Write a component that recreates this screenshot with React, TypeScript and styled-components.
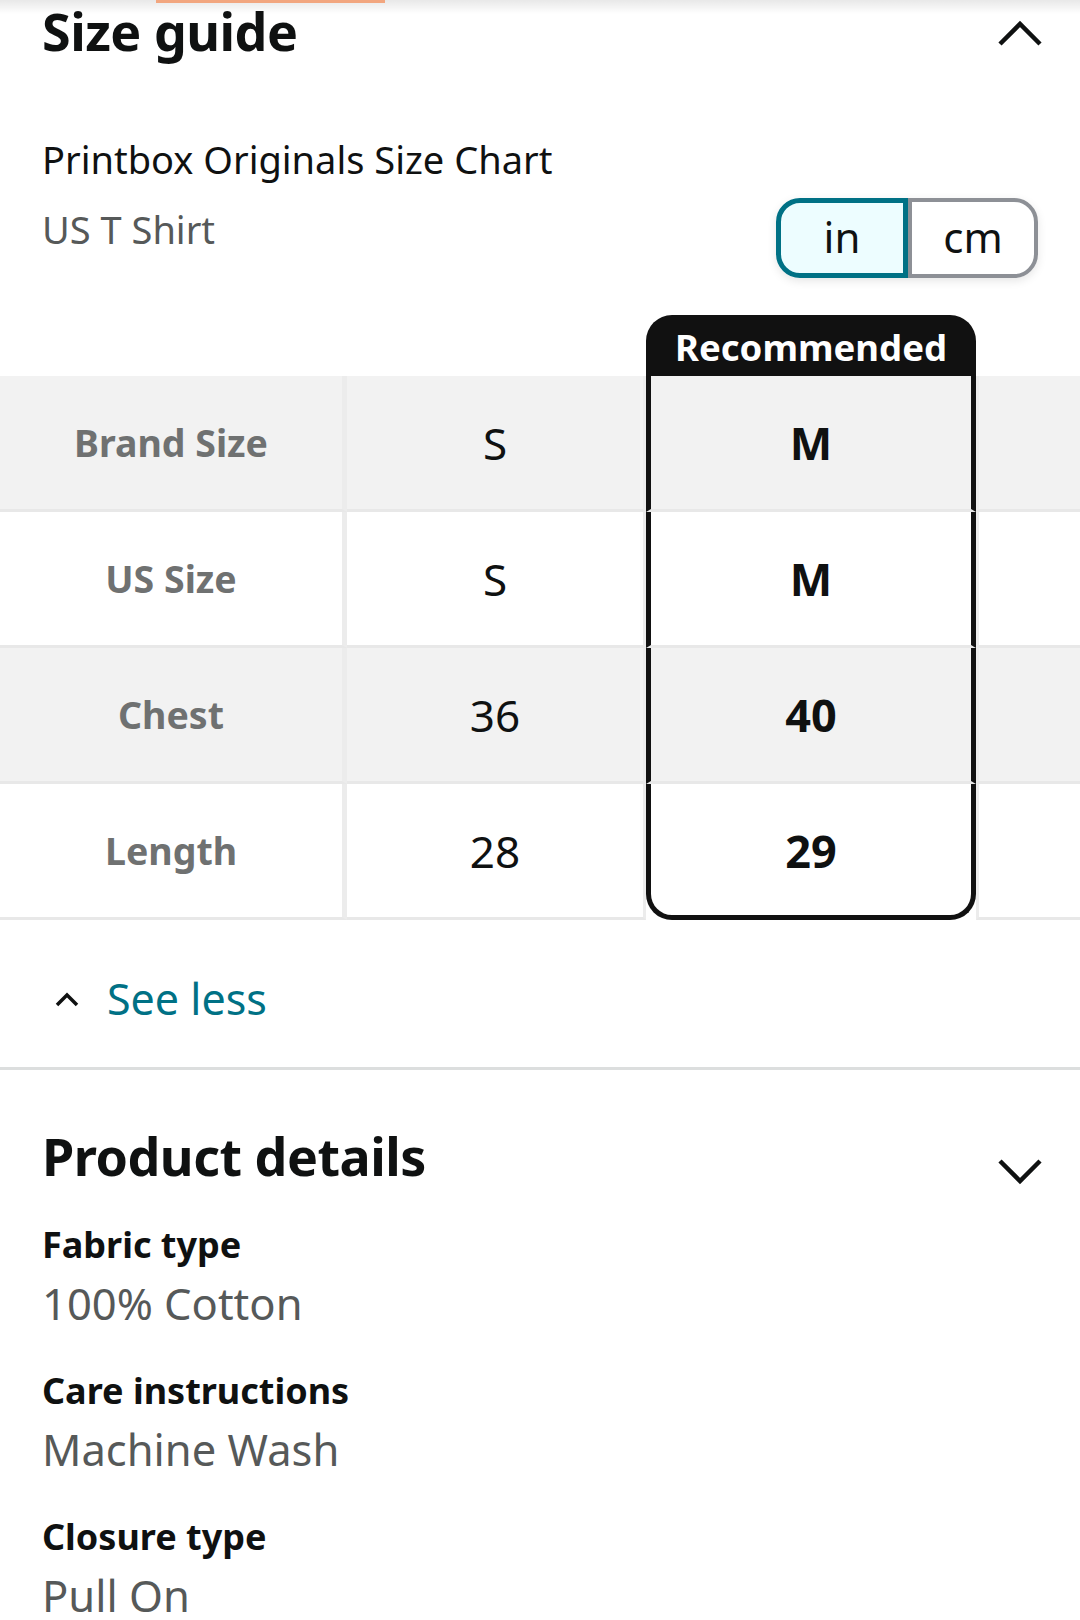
import styled, { createGlobalStyle } from "styled-components";

type SizeRow = {
  label: string;
  size: string;
  pick: string;
  shaded: boolean;
};

const rows: SizeRow[] = [
  { label: "Brand Size", size: "S", pick: "M", shaded: true },
  { label: "US Size", size: "S", pick: "M", shaded: false },
  { label: "Chest", size: "36", pick: "40", shaded: true },
  { label: "Length", size: "28", pick: "29", shaded: false },
];

const details = [
  { title: "Fabric type", value: "100% Cotton" },
  { title: "Care instructions", value: "Machine Wash" },
  { title: "Closure type", value: "Pull On" },
];

const Chevron = ({ up, small }: { up?: boolean; small?: boolean }) =>
  small ? (
    <svg width="24" height="16" viewBox="0 0 24 16">
      <polyline
        points={up ? "2,14 12,4 22,14" : "2,2 12,12 22,2"}
        fill="none"
        stroke="#0f1111"
        strokeWidth="3.5"
      />
    </svg>
  ) : (
    <svg width="46" height="30" viewBox="0 0 46 30">
      <polyline
        points={up ? "3,26 23,6 43,26" : "3,4 23,24 43,4"}
        fill="none"
        stroke="#0f1111"
        strokeWidth="4.5"
      />
    </svg>
  );

const App = () => {
  return (
    <>
      <GlobalStyle />
      <Screen>
        <TabShade>
          <ActiveTab />
        </TabShade>

        <SectionHead>
          <Heading>Size guide</Heading>
          <HeadIcon $top={18}>
            <Chevron up />
          </HeadIcon>
        </SectionHead>

        <ChartHead>
          <div>
            <ChartTitle>Printbox Originals Size Chart</ChartTitle>
            <ChartSub>US T Shirt</ChartSub>
          </div>
          <UnitToggle>
            <UnitButton $active>in</UnitButton>
            <UnitButton>cm</UnitButton>
          </UnitToggle>
        </ChartHead>

        <SizeTable>
          <Blank />
          <Blank />
          <RecHead>Recommended</RecHead>
          <Blank />
          {rows.map((row, i) => (
            <Row key={row.label}>
              <LabelCell $shaded={row.shaded}>{row.label}</LabelCell>
              <ValueCell $shaded={row.shaded}>{row.size}</ValueCell>
              <RecCell $shaded={row.shaded} $last={i === rows.length - 1}>
                {row.pick}
              </RecCell>
              <RestCell $shaded={row.shaded} />
            </Row>
          ))}
        </SizeTable>

        <SeeLess>
          <Chevron up small />
          <SeeLessText>See less</SeeLessText>
        </SeeLess>

        <Divider />

        <SectionHead>
          <DetailsHeading>Product details</DetailsHeading>
          <HeadIcon $top={87}>
            <Chevron />
          </HeadIcon>
        </SectionHead>

        <DetailList>
          {details.map((d) => (
            <DetailItem key={d.title}>
              <DetailTitle>{d.title}</DetailTitle>
              <DetailValue>{d.value}</DetailValue>
            </DetailItem>
          ))}
        </DetailList>
      </Screen>
    </>
  );
};

export default App;

const GlobalStyle = createGlobalStyle`
  * { box-sizing: border-box; }
  html, body {
    margin: 0;
    padding: 0;
    background: #ffffff;
  }
  body {
    font-family: "Noto Sans", "Open Sans", sans-serif;
    color: #0f1111;
  }
`;

const Screen = styled.div`
  position: relative;
  width: 1080px;
  height: 1620px;
  overflow: hidden;
  background: #ffffff;
`;

const TabShade = styled.div`
  position: absolute;
  top: 0;
  left: 0;
  right: 0;
  height: 14px;
  background: linear-gradient(rgba(0, 0, 0, 0.09), rgba(0, 0, 0, 0));
  z-index: 2;
`;

const ActiveTab = styled.div`
  margin-left: 156px;
  width: 229px;
  height: 3px;
  background: #f2a67f;
`;

const SectionHead = styled.div`
  display: flex;
  justify-content: space-between;
  align-items: flex-start;
  padding: 0 37px 0 42px;
`;

const Heading = styled.h2`
  margin: 0;
  font-size: 52px;
  line-height: 62px;
  font-weight: 700;
  letter-spacing: -0.5px;
`;

const DetailsHeading = styled(Heading)`
  margin-top: 55px;
`;

const HeadIcon = styled.div<{ $top: number }>`
  margin-top: ${({ $top }) => $top}px;
  display: flex;
`;

const ChartHead = styled.div`
  display: flex;
  justify-content: space-between;
  align-items: flex-start;
  padding: 73px 42px 0 42px;
`;

const ChartTitle = styled.div`
  font-size: 38px;
  line-height: 48px;
  color: #0f1111;
`;

const ChartSub = styled.div`
  margin-top: 22px;
  font-size: 38px;
  line-height: 48px;
  color: #565959;
`;

const UnitToggle = styled.div`
  margin-top: 63px;
  display: flex;
  width: 262px;
  height: 80px;
  border-radius: 24px;
  box-shadow: 0 3px 10px rgba(0, 0, 0, 0.1);
`;

const UnitButton = styled.div<{ $active?: boolean }>`
  flex: 1;
  display: flex;
  align-items: center;
  justify-content: center;
  padding-bottom: 4px;
  font-size: 42px;
  color: #0f1111;
  background: ${({ $active }) => ($active ? "#edfdff" : "#ffffff")};
  border: ${({ $active }) =>
    $active ? "5px solid #007185" : "4px solid #8d9096"};
  border-radius: ${({ $active }) => ($active ? "24px 0 0 24px" : "0 24px 24px 0")};
`;

const SizeTable = styled.div`
  margin-top: 37px;
  display: grid;
  grid-template-columns: 347px 299px 330px 1fr;
  grid-template-rows: 61px;
  grid-auto-rows: 136px;
`;

const Row = styled.div`
  display: contents;
`;

const Blank = styled.div``;

const RecHead = styled.div`
  display: flex;
  align-items: center;
  justify-content: center;
  background: #111111;
  border-radius: 26px 26px 0 0;
  color: #ffffff;
  font-size: 36.5px;
  font-weight: 700;
  padding-top: 2px;
`;

const Cell = styled.div<{ $shaded: boolean }>`
  display: flex;
  align-items: center;
  justify-content: center;
  background: ${({ $shaded }) => ($shaded ? "#f2f2f2" : "#ffffff")};
  border-bottom: 3px solid #e8e8e8;
`;

const LabelCell = styled(Cell)`
  border-right: 5px solid #ececec;
  font-size: 37.5px;
  font-weight: 700;
  color: #6f7171;
`;

const ValueCell = styled(Cell)`
  border-right: 3px solid #ececec;
  font-size: 44px;
  color: #0f1111;
`;

const RecCell = styled(Cell)<{ $last: boolean }>`
  border-left: 5px solid #111111;
  border-right: 5px solid #111111;
  font-size: 45px;
  font-weight: 700;
  color: #0f1111;
  ${({ $last }) =>
    $last &&
    `
    border-bottom: 5px solid #111111;
    border-radius: 0 0 26px 26px;
    padding-top: 2px;
  `}
`;

const RestCell = styled(Cell)`
  border-left: 3px solid #ececec;
`;

const SeeLess = styled.div`
  display: flex;
  align-items: center;
  gap: 28px;
  margin-top: 51px;
  padding-left: 55px;
  height: 56px;
`;

const SeeLessText = styled.span`
  font-size: 43px;
  line-height: 56px;
  color: #007185;
`;

const Divider = styled.div`
  margin-top: 40px;
  height: 3px;
  background: #dcdede;
`;

const DetailList = styled.div`
  display: flex;
  flex-direction: column;
  gap: 36px;
  margin-top: 34px;
  padding: 0 42px;
`;

const DetailItem = styled.div`
  display: flex;
  flex-direction: column;
`;

const DetailTitle = styled.div`
  font-size: 36px;
  line-height: 48px;
  font-weight: 700;
  color: #0f1111;
`;

const DetailValue = styled.div`
  margin-top: 6px;
  font-size: 43.5px;
  line-height: 56px;
  color: #565959;
`;
